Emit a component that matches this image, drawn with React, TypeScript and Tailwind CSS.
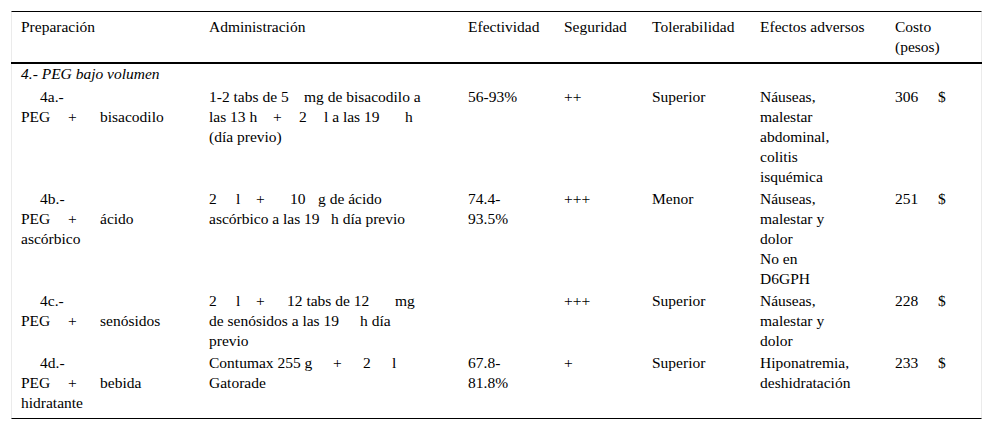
const grid = 'grid grid-cols-[187px_259px_96px_88px_108px_135px_96px]';

// fixed-width inline piece, keeps the wide unit gaps of the original
function Seg({ w, children }: { w: string; children?: React.ReactNode }) {
  return <span className={`inline-block whitespace-pre ${w}`}>{children}</span>;
}

function Prep({ code, last, extra }: { code: string; last: string; extra?: string }) {
  return (
    <div className="pl-[9px]">
      <div className="pl-[19px]">{code}</div>
      <div className="whitespace-nowrap">
        <Seg w="w-[47px]">PEG</Seg>
        <Seg w="w-[32px]">+</Seg>
        {last}
      </div>
      {extra && <div>{extra}</div>}
    </div>
  );
}

function Cost({ value }: { value: string }) {
  return (
    <div className="pl-[10px] whitespace-nowrap">
      <Seg w="w-[43px]">{value}</Seg>$
    </div>
  );
}

export default function App() {
  return (
    <div className="min-h-screen bg-white pt-[11px] font-serif">
      <div className="font-['Liberation_Serif'] text-[15.5px] leading-5 text-black">
        <div className="ml-[11px] w-[971px] border-x border-t border-b border-x-[#ebebeb] border-t-black border-b-black pb-[4px]">
          {/* header */}
          <div className={`${grid} -mx-px px-px border-b-2 border-black pt-[5px] pb-[5px]`}>
            <div className="pl-[9px]">Preparación</div>
            <div className="pl-[10px]">Administración</div>
            <div className="pl-[10px]">Efectividad</div>
            <div className="pl-[10px]">Seguridad</div>
            <div className="pl-[10px]">Tolerabilidad</div>
            <div className="pl-[10px]">Efectos adversos</div>
            <div className="pl-[10px]">
              Costo
              <br />
              (pesos)
            </div>
          </div>

          <div className="pl-[9px] pb-[2px] italic">4.- PEG bajo volumen</div>

          {/* 4a */}
          <div className={`${grid} py-px`}>
            <Prep code="4a.-" last="bisacodilo" />
            <div className="pl-[10px] whitespace-nowrap">
              <div>
                <Seg w="w-[95px]">1-2 tabs de 5</Seg>mg de bisacodilo a
              </div>
              <div>
                <Seg w="w-[64px]">las 13 h</Seg>
                <Seg w="w-[26px]">+</Seg>
                <Seg w="w-[25px]">2</Seg>
                <Seg w="w-[81px]">l a las 19</Seg>h
              </div>
              <div>(día previo)</div>
            </div>
            <div className="pl-[10px]">56-93%</div>
            <div className="pl-[10px]">++</div>
            <div className="pl-[10px]">Superior</div>
            <div className="pl-[10px]">
              Náuseas,
              <br />
              malestar
              <br />
              abdominal,
              <br />
              colitis
              <br />
              isquémica
            </div>
            <Cost value="306" />
          </div>

          {/* 4b */}
          <div className={`${grid} py-px`}>
            <Prep code="4b.-" last="ácido" extra="ascórbico" />
            <div className="pl-[10px] whitespace-nowrap">
              <div>
                <Seg w="w-[27px]">2</Seg>
                <Seg w="w-[20px]">l</Seg>
                <Seg w="w-[34px]">+</Seg>
                <Seg w="w-[28px]">10</Seg>g de ácido
              </div>
              <div>
                <Seg w="w-[122px]">ascórbico a las 19</Seg>h día previo
              </div>
            </div>
            <div className="pl-[10px]">
              74.4-
              <br />
              93.5%
            </div>
            <div className="pl-[10px]">+++</div>
            <div className="pl-[10px]">Menor</div>
            <div className="pl-[10px]">
              Náuseas,
              <br />
              malestar y
              <br />
              dolor
              <br />
              No en
              <br />
              D6GPH
            </div>
            <Cost value="251" />
          </div>

          {/* 4c */}
          <div className={`${grid} py-px`}>
            <Prep code="4c.-" last="senósidos" />
            <div className="pl-[10px] whitespace-nowrap">
              <div>
                <Seg w="w-[27px]">2</Seg>
                <Seg w="w-[20px]">l</Seg>
                <Seg w="w-[31px]">+</Seg>
                <Seg w="w-[108px]">12 tabs de 12</Seg>mg
              </div>
              <div>
                <Seg w="w-[151px]">de senósidos a las 19</Seg>h día
              </div>
              <div>previo</div>
            </div>
            <div className="pl-[10px]"></div>
            <div className="pl-[10px]">+++</div>
            <div className="pl-[10px]">Superior</div>
            <div className="pl-[10px]">
              Náuseas,
              <br />
              malestar y
              <br />
              dolor
            </div>
            <Cost value="228" />
          </div>

          {/* 4d */}
          <div className={`${grid} py-px`}>
            <Prep code="4d.-" last="bebida" extra="hidratante" />
            <div className="pl-[10px] whitespace-nowrap">
              <div>
                <Seg w="w-[124px]">Contumax 255 g</Seg>
                <Seg w="w-[30px]">+</Seg>
                <Seg w="w-[29px]">2</Seg>l
              </div>
              <div>Gatorade</div>
            </div>
            <div className="pl-[10px]">
              67.8-
              <br />
              81.8%
            </div>
            <div className="pl-[10px]">+</div>
            <div className="pl-[10px]">Superior</div>
            <div className="pl-[10px]">
              Hiponatremia,
              <br />
              deshidratación
            </div>
            <Cost value="233" />
          </div>
        </div>
      </div>
    </div>
  );
}
